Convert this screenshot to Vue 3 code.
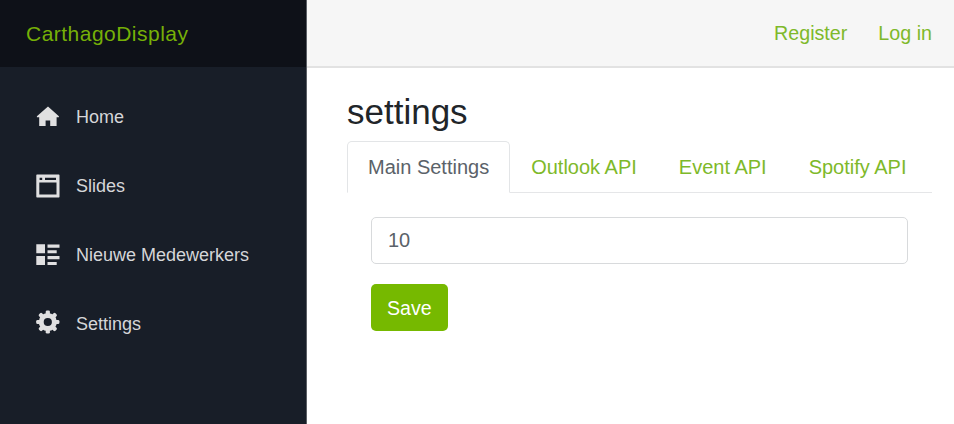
<script setup>
import { ref } from 'vue'

const links = [
  { label: 'Home', icon: 'home' },
  { label: 'Slides', icon: 'browser' },
  { label: 'Nieuwe Medewerkers', icon: 'list' },
  { label: 'Settings', icon: 'cog' },
]
const tabs = ['Main Settings', 'Outlook API', 'Event API', 'Spotify API']
const active = ref(0)
const value = ref('10')
</script>

<template>
  <div class="page">
    <aside class="sidebar">
      <div class="brand"><a>CarthagoDisplay</a></div>
      <nav class="menu">
        <a v-for="link in links" :key="link.label" class="menu-item">
          <svg v-if="link.icon === 'home'" class="icon" viewBox="0 0 24 24">
            <path d="M12 1.4.9 11.2v1.1h2.3V21h6.4v-5.6h4.6V21h6.4v-8.7h2.3v-1.1z" />
          </svg>
          <svg v-else-if="link.icon === 'browser'" class="icon" viewBox="0 0 24 24">
            <path fill-rule="evenodd" d="M1 .5h21.8q.7 0 .7.7v21.6q0 .7-.7.7H1q-.7 0-.7-.7V1.200q0-.7.7-.7zM3.300 8.500v12h17.200v-12zM3.600 3.700v2.200h2.600V3.700zM9 3.700v2.200h11V3.700z" />
          </svg>
          <svg v-else-if="link.icon === 'list'" class="icon" viewBox="0 0 24 24">
            <path d="M.3 1.300H9v9H.3zM.3 13H9v9H.3zM11.500 1.500h12v3.200h-12zM11.500 7.300h9.200v3h-9.200zM11.500 13h12v3.200h-12zM11.500 18.900h9.200V22h-9.200z" />
          </svg>
          <svg v-else class="icon cog" viewBox="0 0 24 24">
            <g transform="translate(11.800 12)">
              <circle r="6.600" fill="none" class="ring" />
              <rect v-for="a in 8" :key="a" x="-2.100" y="-11.600" width="4.200" height="5.200" rx="1.400" :transform="`rotate(${a * 45})`" />
            </g>
          </svg>
          <span>{{ link.label }}</span>
        </a>
      </nav>
    </aside>
    <main class="main">
      <header class="topbar">
        <a>Register</a>
        <a>Log in</a>
      </header>
      <section class="content">
        <h1>settings</h1>
        <div class="tabs">
          <button
            v-for="(tab, i) in tabs"
            :key="tab"
            class="tab"
            :class="{ active: active === i }"
            @click="active = i"
          >{{ tab }}</button>
        </div>
        <form class="panel" @submit.prevent>
          <input v-model="value" class="field" type="text" />
          <button class="save">Save</button>
        </form>
      </section>
    </main>
  </div>
</template>

<style>
body {
  margin: 0;
  overflow: hidden;
}
</style>

<style scoped>
.page {
  display: flex;
  height: 424px;
  box-sizing: border-box;
  background: #fff;
  color: #212529;
  font: 20px/30px "Liberation Sans", Arial, sans-serif;
}
.sidebar {
  width: 307px;
  flex: none;
  box-sizing: border-box;
  border-right: 1px solid #5b5f65;
  background: #181e28;
}
.brand {
  display: flex;
  align-items: center;
  height: 67px;
  box-sizing: border-box;
  padding-left: 26px;
  background: #0e1118;
  color: #76b007;
  font-size: 21px;
  letter-spacing: 0.48px;
}
.menu {
  display: flex;
  flex-direction: column;
  gap: 9px;
  padding: 20px 20px 0 36px;
}
.menu-item {
  display: flex;
  align-items: center;
  gap: 16px;
  height: 60px;
  color: #d5d6d8;
  font-size: 18px;
}
.icon {
  width: 24px;
  height: 24px;
  flex: none;
  fill: #e0e0e1;
}
.cog {
  margin-bottom: 5px;
}
.ring {
  stroke: #e0e0e1;
  stroke-width: 5px;
}
.main {
  flex: 1;
  min-width: 0;
}
.topbar {
  display: flex;
  align-items: center;
  justify-content: flex-end;
  gap: 31px;
  height: 68px;
  box-sizing: border-box;
  border-bottom: 2px solid #e2e2e2;
  padding-right: 22px;
  background: #f6f6f6;
  color: #7eb92a;
  font-size: 19.7px;
}
.content {
  padding: 22px 22px 0 40px;
}
h1 {
  margin: 0 0 7px;
  font-size: 35px;
  line-height: 44px;
  font-weight: 400;
}
.tabs {
  display: flex;
  height: 52px;
  box-sizing: border-box;
  border-bottom: 1.5px solid #e5e6e8;
}
.tab {
  height: 52px;
  box-sizing: border-box;
  margin: 0;
  padding: 0 20px;
  border: 1px solid transparent;
  border-radius: 5px 5px 0 0;
  background: transparent;
  color: #7eb92a;
  font: inherit;
  white-space: nowrap;
}
.tab.active {
  border-color: #e3e5e7;
  border-bottom-color: #fff;
  background: #fff;
  color: #5b6269;
}
.panel {
  display: flex;
  flex-direction: column;
  align-items: flex-start;
  gap: 20px;
  padding: 24px 24px 0;
}
.field {
  width: 100%;
  height: 47px;
  box-sizing: border-box;
  border: 1px solid #d8dadc;
  border-radius: 5px;
  padding: 0 16px;
  background: #fff;
  color: #5b6269;
  font: inherit;
  outline: none;
}
.save {
  height: 47px;
  box-sizing: border-box;
  border: 0;
  border-radius: 5px;
  padding: 0 16px;
  background: #76b900;
  color: #fff;
  font: inherit;
  font-size: 19.6px;
}
</style>
